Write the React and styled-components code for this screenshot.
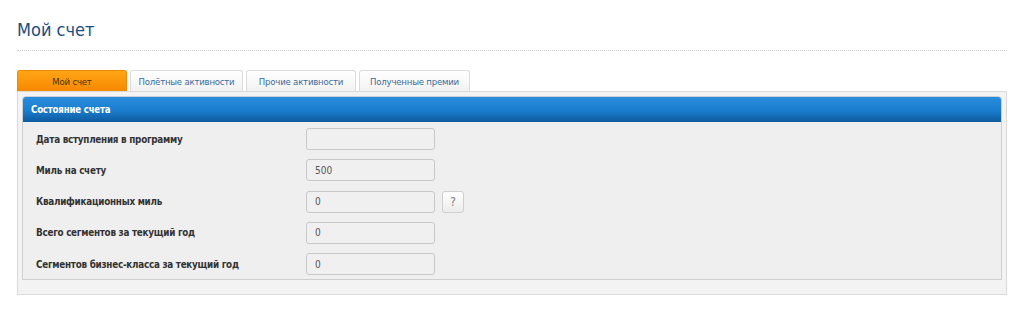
import React from 'react'
import styled, { createGlobalStyle } from 'styled-components'

const GlobalStyle = createGlobalStyle`
    body {
        margin: 0;
        background: #fff;
        font-family: 'DejaVu Sans Condensed', 'DejaVu Sans', sans-serif;
    }
`

const Page = styled.div`
    width: 990px;
    padding: 17px 17px 0;
`

const Title = styled.h1`
    margin: 0;
    padding-bottom: 8px;
    font-family: 'DejaVu Sans Condensed', 'DejaVu Sans', sans-serif;
    font-size: 18px;
    line-height: 25px;
    font-weight: normal;
    color: #1b4d80;
    border-bottom: 1px dotted #cfcfcf;
`

const Tabs = styled.div`
    display: flex;
    gap: 3px;
    margin-top: 19px;
`

const Tab = styled.div`
    width: ${p => p.width}px;
    height: 21px;
    box-sizing: border-box;
    display: flex;
    align-items: center;
    justify-content: center;
    font-size: 9.5px;
    letter-spacing: -0.2px;
    border: 1px solid ${p => (p.active ? '#f08a00' : '#dcdcdc')};
    border-bottom: none;
    border-radius: 3px 3px 0 0;
    color: ${p => (p.active ? '#4a3300' : '#3a6c9c')};
    background: ${p =>
        p.active
            ? 'linear-gradient(#ffa516, #f78800)'
            : 'linear-gradient(#ffffff, #f2f2f2)'};
`

const Panel = styled.div`
    border: 1px solid #dadada;
    background: #f3f3f3;
    padding: 4px 4px 14px;
    box-shadow: 0 1px 1px rgba(0, 0, 0, 0.05);
`

const Box = styled.div`
    border: 1px solid #cfcfcf;
    border-radius: 4px 4px 0 0;
    background: #efefef;
`

const BoxHeader = styled.div`
    height: 25px;
    display: flex;
    align-items: center;
    padding-left: 8px;
    border-radius: 3px 3px 0 0;
    background: linear-gradient(#2a8ee0 0%, #1a7ccc 55%, #0e5a9e 100%);
    color: #fff;
    font-size: 9.6px;
    letter-spacing: -0.2px;
    font-weight: bold;
`

const Rows = styled.div`
    display: flex;
    flex-direction: column;
    gap: 9.3px;
    padding: 6px 0 4px 13px;
`

const Row = styled.div`
    display: flex;
    align-items: center;
    height: 22px;
`

const Label = styled.div`
    width: 270px;
    font-size: 9.8px;
    letter-spacing: -0.25px;
    font-weight: bold;
    color: #333;
`

const Field = styled.div`
    width: 129px;
    height: 22px;
    box-sizing: border-box;
    display: flex;
    align-items: center;
    padding-left: 8px;
    border: 1px solid #c8c8c8;
    border-radius: 3px;
    background: #f0f0f0;
    font-size: 10px;
    color: #555;
`

const HelpButton = styled.div`
    width: 22px;
    height: 22px;
    margin-left: 7px;
    box-sizing: border-box;
    display: flex;
    align-items: center;
    justify-content: center;
    border: 1px solid #cfcfcf;
    border-radius: 3px;
    background: linear-gradient(#ffffff, #ececec);
    font-size: 12.5px;
    color: #808080;
`

const tabs = [
    { name: 'Мой счет', width: 110, active: true },
    { name: 'Полётные активности', width: 113 },
    { name: 'Прочие активности', width: 110 },
    { name: 'Полученные премии', width: 111 },
]

const rows = [
    { label: 'Дата вступления в программу', value: '' },
    { label: 'Миль на счету', value: '500' },
    { label: 'Квалификационных миль', value: '0', help: true },
    { label: 'Всего сегментов за текущий год', value: '0' },
    { label: 'Сегментов бизнес-класса за текущий год', value: '0' },
]

const App = () => {
    return (
        <Page>
            <GlobalStyle />
            <Title>Мой счет</Title>

            <Tabs>
                {tabs.map((tab, index) => (
                    <Tab key={index + 'tab'} width={tab.width} active={tab.active}>
                        {tab.name}
                    </Tab>
                ))}
            </Tabs>

            <Panel>
                <Box>
                    <BoxHeader>Состояние счета</BoxHeader>
                    <Rows>
                        {rows.map((row, index) => (
                            <Row key={index + 'row'}>
                                <Label>{row.label}</Label>
                                <Field>{row.value}</Field>
                                {row.help && <HelpButton>?</HelpButton>}
                            </Row>
                        ))}
                    </Rows>
                </Box>
            </Panel>
        </Page>
    )
}

export default App
